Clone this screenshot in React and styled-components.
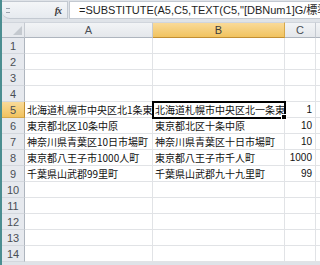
import styled, { createGlobalStyle } from "styled-components";

const GlobalStyle = createGlobalStyle`
  html, body {
    margin: 0;
    padding: 0;
    background: #ffffff;
    overflow: hidden;
  }
`;

const Window = styled.div`
  width: 320px;
  height: 265px;
  overflow: hidden;
  background: #dfe3e8;
  border-left: 2px solid #4b8e91;
  box-sizing: border-box;
  font-family: "Liberation Sans", Arial, sans-serif;
`;

const FormulaBar = styled.div`
  display: flex;
  height: 20px;
  padding-top: 1px;
  box-sizing: border-box;
`;

const NameArea = styled.div`
  width: 66px;
  margin-bottom: 1px;
  display: flex;
  align-items: center;
  justify-content: space-between;
  padding: 0 6px 0 4px;
  box-sizing: border-box;
  background: linear-gradient(#f4f6f8, #e6eaef);
  border: 1px solid #c3c9d1;
  border-radius: 0 0 0 8px;
  border-left: none;
`;

const Grip = styled.span`
  width: 4px;
  height: 3px;
  border-top: 1px solid #9aa3ad;
  border-bottom: 1px solid #9aa3ad;
`;

const FxIcon = styled.span`
  font-family: "Liberation Serif", serif;
  font-style: italic;
  font-weight: bold;
  font-size: 10px;
  color: #3c3c3c;
  letter-spacing: -1px;
`;

const FormulaInput = styled.div`
  flex: 1;
  margin-left: 1px;
  margin-bottom: 1px;
  background: #ffffff;
  border: 1px solid #c3c9d1;
  border-right: none;
  padding-left: 9px;
  font-size: 11px;
  line-height: 17px;
  color: #1e1e1e;
  white-space: nowrap;
  overflow: hidden;
  font-family: "Liberation Sans", "Noto Sans CJK JP", sans-serif;
`;

const Sheet = styled.div`
  margin-top: 2px;
  display: grid;
  grid-template-columns: 23px 128px 132px 31px 1fr;
  grid-auto-rows: 16px;
  background: #ffffff;
`;

const Corner = styled.div`
  position: relative;
  background: #e7eaee;
  border-right: 1px solid #c5cad1;
  border-bottom: 1px solid #aeb5be;
  border-top: 1px solid #d0d5dc;
  box-sizing: border-box;
  &::after {
    content: "";
    position: absolute;
    right: 2px;
    bottom: 2px;
    border-style: solid;
    border-width: 0 0 9px 9px;
    border-color: transparent transparent #c4c9cf transparent;
  }
`;

const ColHead = styled.div`
  display: flex;
  align-items: center;
  justify-content: center;
  font-size: 11px;
  color: ${(p) => (p.$active ? "#3b3b3b" : "#4a4f55")};
  background: ${(p) =>
    p.$active
      ? "linear-gradient(#f9da99, #f1c35f)"
      : "linear-gradient(#f2f4f6, #e4e7eb)"};
  border-right: 1px solid ${(p) => (p.$active ? "#d6a84a" : "#c5cad1")};
  border-bottom: 1px solid ${(p) => (p.$active ? "#c28f33" : "#aeb5be")};
  border-top: 1px solid #d0d5dc;
  box-sizing: border-box;
`;

const RowHead = styled.div`
  display: flex;
  align-items: center;
  justify-content: center;
  font-size: 11px;
  color: #4a4f55;
  background: ${(p) =>
    p.$active ? "linear-gradient(#f9da99, #f1c35f)" : "#e6e9ee"};
  border-right: 1px solid ${(p) => (p.$active ? "#c28f33" : "#aeb5be")};
  border-bottom: 1px solid ${(p) => (p.$active ? "#d6a84a" : "#d3d7dd")};
  box-sizing: border-box;
`;

const Cell = styled.div`
  position: relative;
  border-right: 1px solid #e1e3e6;
  border-bottom: 1px solid #e1e3e6;
  box-sizing: border-box;
  padding: 0 ${(p) => (p.$num ? "3px" : "2px")};
  font-family: ${(p) =>
    p.$num
      ? `"Liberation Sans", Arial, sans-serif`
      : `"Noto Sans CJK JP", sans-serif`};
  font-size: 10px;
  line-height: 15px;
  color: #111111;
  text-align: ${(p) => (p.$num ? "right" : "left")};
  white-space: nowrap;
  overflow: visible;
  ${(p) =>
    p.$selected &&
    `
    outline: 2px solid #000;
    outline-offset: -1px;
    z-index: 1;
    &::after {
      content: "";
      position: absolute;
      right: -3px;
      bottom: -3px;
      width: 4px;
      height: 4px;
      background: #000;
      border: 1px solid #fff;
    }
  `}
`;

const columns = ["A", "B", "C", ""];

const data = {
  5: ["北海道札幌市中央区北1条東", "北海道札幌市中央区北一条東", "1"],
  6: ["東京都北区10条中原", "東京都北区十条中原", "10"],
  7: ["神奈川県青葉区10日市場町", "神奈川県青葉区十日市場町", "10"],
  8: ["東京都八王子市1000人町", "東京都八王子市千人町", "1000"],
  9: ["千葉県山武郡99里町", "千葉県山武郡九十九里町", "99"],
};

const rows = Array.from({ length: 14 }, (_, i) => i + 1);

export default function App() {
  return (
    <>
      <GlobalStyle />
      <Window>
        <FormulaBar>
          <NameArea>
            <Grip />
            <FxIcon>fx</FxIcon>
          </NameArea>
          <FormulaInput>
            =SUBSTITUTE(A5,C5,TEXT(C5,"[DBNum1]G/標準"))
          </FormulaInput>
        </FormulaBar>
        <Sheet>
          <Corner />
          {columns.map((c) => (
            <ColHead key={c || "D"} $active={c === "B"}>
              {c}
            </ColHead>
          ))}
          {rows.map((r) => {
            const values = data[r] || ["", "", ""];
            return [
              <RowHead key={`h${r}`} $active={r === 5}>
                {r}
              </RowHead>,
              <Cell key={`a${r}`}>{values[0]}</Cell>,
              <Cell key={`b${r}`} $selected={r === 5}>
                {values[1]}
              </Cell>,
              <Cell key={`c${r}`} $num>
                {values[2]}
              </Cell>,
              <Cell key={`d${r}`} />,
            ];
          })}
        </Sheet>
      </Window>
    </>
  );
}
